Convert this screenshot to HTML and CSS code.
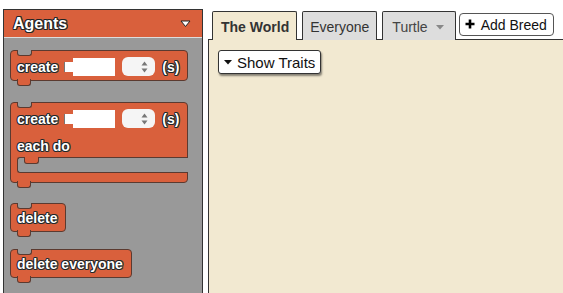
FILE: index.html
```html
<!DOCTYPE html>
<html lang="en">
<head>
    <meta charset="UTF-8">
    <meta name="viewport" content="width=device-width, initial-scale=1.0">
    <title>Agents - Breeds</title>
    <link rel="stylesheet" href="styles.css">
</head>
<body>
    <div class="app">
        <aside class="palette">
            <div class="category">
                <span class="category-name">Agents</span>
                <svg class="category-toggle" width="11" height="8" viewBox="0 0 11 8">
                    <polygon points="1,1 10,1 5.5,6.5" fill="#fff" stroke="#222" stroke-width="1" stroke-linejoin="round"/>
                </svg>
            </div>

            <div class="blocks">
                <!-- create N (s) -->
                <div class="block block-wide">
                    <div class="block-row">
                        <span class="label">create</span>
                        <span class="value-input"></span>
                        <span class="spinner">
                            <svg width="7" height="12" viewBox="0 0 7 12">
                                <polygon points="3.5,0.5 6.5,4.5 0.5,4.5" fill="#777"/>
                                <polygon points="3.5,11.5 6.5,7.5 0.5,7.5" fill="#777"/>
                            </svg>
                        </span>
                        <span class="label">(s)</span>
                    </div>
                </div>

                <!-- create N (s) each do -->
                <div class="block block-wide block-c">
                    <div class="block-row">
                        <span class="label">create</span>
                        <span class="value-input"></span>
                        <span class="spinner">
                            <svg width="7" height="12" viewBox="0 0 7 12">
                                <polygon points="3.5,0.5 6.5,4.5 0.5,4.5" fill="#777"/>
                                <polygon points="3.5,11.5 6.5,7.5 0.5,7.5" fill="#777"/>
                            </svg>
                        </span>
                        <span class="label">(s)</span>
                    </div>
                    <div class="block-row block-row-text">
                        <span class="label">each do</span>
                    </div>
                    <div class="mouth"></div>
                </div>

                <div class="block block-simple">
                    <span class="label">delete</span>
                </div>

                <div class="block block-simple">
                    <span class="label">delete everyone</span>
                </div>
            </div>
        </aside>

        <main class="workspace">
            <nav class="tabs">
                <div class="tab active">The World</div>
                <div class="tab">Everyone</div>
                <div class="tab tab-breed">
                    Turtle
                    <svg width="8" height="5" viewBox="0 0 8 5">
                        <polygon points="0,0 8,0 4,4.5" fill="#888"/>
                    </svg>
                </div>
                <button class="add-breed">
                    <svg class="plus" width="10" height="10" viewBox="0 0 10 10">
                        <path d="M5 0.5V9.5M0.5 5H9.5" stroke="#000" stroke-width="2.6"/>
                    </svg>
                    Add Breed
                </button>
            </nav>

            <section class="traits">
                <button class="show-traits">
                    <svg width="8" height="5" viewBox="0 0 8 5">
                        <polygon points="0,0 8,0 4,4.5" fill="#111"/>
                    </svg>
                    Show Traits
                </button>
            </section>
        </main>
    </div>
</body>
</html>
```

FILE: styles.css
```css
* {
    box-sizing: border-box;
}

body {
    margin: 0;
    background: white;
    font-family: 'Liberation Sans', Arial, sans-serif;
    overflow: hidden;
}

.app {
    display: flex;
    height: 100vh;
    padding: 9px 0 0 3px;
}

/* block palette */

.palette {
    width: 200px;
    flex-shrink: 0;
    display: flex;
    flex-direction: column;
    background: #999;
    border: 1px solid #333;
    border-bottom: none;
}

.category {
    height: 28px;
    background: #d9603c;
    border-bottom: 1px solid #ddd;
    display: flex;
    align-items: center;
    justify-content: space-between;
    padding: 0 11px 0 9px;
}

.category-name {
    color: white;
    font-size: 16px;
    font-weight: bold;
    text-shadow: -1px 0 #222, 1px 0 #222, 0 -1px #222, 0 1px #222,
        -1px -1px #333, 1px 1px #333, 1px -1px #333, -1px 1px #333;
    margin-top: 1px;
}

.category-toggle {
    margin-top: 1px;
}

.blocks {
    display: flex;
    flex-direction: column;
    align-items: flex-start;
    padding: 12px 0 0 6px;
}

.block {
    position: relative;
    background: #d9603c;
    border: 1px solid #5b3a30;
    border-radius: 4px;
}

/* top notch */
.block::before {
    content: '';
    position: absolute;
    top: -1px;
    left: 6px;
    width: 13px;
    height: 5px;
    background: #999;
    border: 1px solid #5b3a30;
    border-top: none;
    border-radius: 0 0 3px 3px;
}

/* bottom tab */
.block::after {
    content: '';
    position: absolute;
    bottom: -6px;
    left: 6px;
    width: 12px;
    height: 6px;
    background: #d9603c;
    border: 1px solid #5b3a30;
    border-top: none;
    border-radius: 0 0 3px 3px;
}

.label {
    color: white;
    font-size: 14px;
    font-weight: bold;
    text-shadow: -1px 0 #222, 1px 0 #222, 0 -1px #222, 0 1px #222,
        -1px -1px #444, 1px 1px #444, 1px -1px #444, -1px 1px #444;
    white-space: nowrap;
}

.block-wide {
    width: 178px;
}

.block-row {
    display: flex;
    align-items: center;
    gap: 6px;
    height: 29px;
    padding: 2px 0 0 6px;
}

.value-input {
    position: relative;
    width: 42px;
    height: 18px;
    margin-left: 9px;
    background: white;
}

.value-input::before {
    content: '';
    position: absolute;
    left: -9px;
    top: 4px;
    width: 9px;
    height: 10px;
    background: white;
    border-left: 1px solid #777;
}

.spinner {
    width: 33px;
    height: 19px;
    margin: 0 1px;
    background: #f5f5f5;
    border-radius: 6px;
    display: flex;
    align-items: center;
    justify-content: flex-end;
    padding-right: 7px;
}

.block-c {
    margin-top: 21px;
}

.block-row-text {
    height: 25px;
    padding-top: 3px;
}

.mouth {
    position: relative;
    height: 16px;
    margin: 0 -1px 9px 6px;
    background: #999;
    border: 1px solid #5b3a30;
    border-right: none;
    border-radius: 3px 0 0 3px;
}

/* notch hanging into the mouth */
.mouth::before {
    content: '';
    position: absolute;
    top: -1px;
    left: 6px;
    width: 13px;
    height: 6px;
    background: #d9603c;
    border: 1px solid #5b3a30;
    border-top: none;
    border-radius: 0 0 3px 3px;
}

.block-simple {
    height: 29px;
    display: flex;
    align-items: center;
    padding: 1px 8px 0 6px;
    margin-top: 20px;
}

.block-simple + .block-simple {
    margin-top: 17px;
}

/* workspace */

.workspace {
    flex: 1;
    display: flex;
    flex-direction: column;
    margin-left: 5px;
}

.tabs {
    display: flex;
    align-items: flex-end;
    gap: 5px;
    padding: 1px 0 0 4px;
    height: 30px;
}

.tab {
    position: relative;
    display: flex;
    align-items: center;
    height: 29px;
    padding: 1px 7px 0 7px;
    margin-bottom: -1px;
    background: #ddd;
    border: 1px solid #333;
    border-bottom: none;
    border-radius: 2px 2px 0 0;
    color: #333;
    font-size: 14px;
    white-space: nowrap;
}

.tab.active {
    background: #f2e9d1;
    font-weight: bold;
    padding: 1px 7px 0 8px;
    z-index: 1;
}

.tab-breed {
    color: #444;
    padding-left: 9px;
    padding-right: 11px;
}

.tab-breed svg {
    margin-left: 8px;
    margin-top: 1px;
}

.add-breed {
    align-self: flex-start;
    display: flex;
    align-items: center;
    gap: 6px;
    margin: 3px 0 0 -2px;
    height: 23px;
    background: white;
    border: 1px solid #555;
    border-radius: 4px;
    padding: 0 6px 0 5px;
    font-family: inherit;
    font-size: 14px;
    color: #111;
    white-space: nowrap;
}

.plus {
    margin-top: -1px;
}

.traits {
    flex: 1;
    background: #f2e9d1;
    border-top: 1px solid #333;
    border-left: 1px solid #333;
    padding: 10px 9px;
}

.show-traits {
    display: flex;
    align-items: center;
    gap: 5px;
    height: 24px;
    padding: 0 5px 0 5px;
    background: white;
    border: 1px solid #333;
    border-radius: 3px;
    box-shadow: 1px 2px 2px rgba(0, 0, 0, 0.45);
    font-family: inherit;
    font-size: 15px;
    color: #111;
}
```
